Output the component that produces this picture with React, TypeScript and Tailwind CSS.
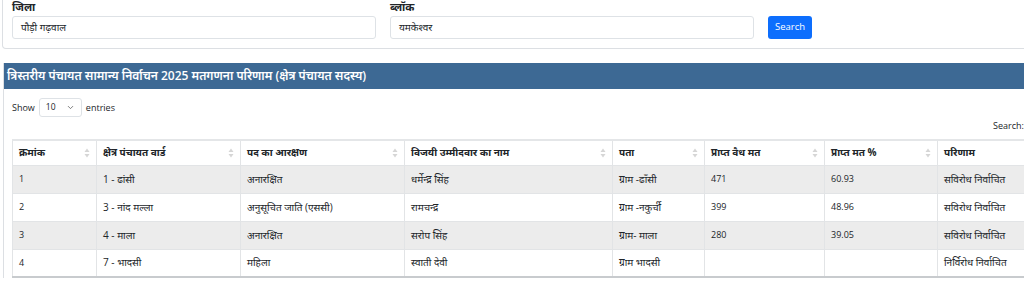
import { ChevronDown } from 'lucide-react'

const rows = [
  ['1', '1 - ढांसी', 'अनारक्षित', 'धर्मेन्द्र सिंह', 'ग्राम -ढाँसी', '471', '60.93', 'सविरोध निर्वाचित'],
  ['2', '3 - नांद मल्ला', 'अनुसूचित जाति (एससी)', 'रामचन्द्र', 'ग्राम -नकुर्ची', '399', '48.96', 'सविरोध निर्वाचित'],
  ['3', '4 - माला', 'अनारक्षित', 'सरोप सिंह', 'ग्राम- माला', '280', '39.05', 'सविरोध निर्वाचित'],
  ['4', '7 - भादसी', 'महिला', 'स्वाती देवी', 'ग्राम भादसी', '', '', 'निर्विरोध निर्वाचित'],
]

const columns = [
  { label: 'क्रमांक', w: 'w-[84px]' },
  { label: 'क्षेत्र पंचायत वार्ड', w: 'w-[144px]' },
  { label: 'पद का आरक्षण', w: 'w-[164px]' },
  { label: 'विजयी उम्मीदवार का नाम', w: 'w-[208px]' },
  { label: 'पता', w: 'w-[92px]' },
  { label: 'प्राप्त वैध मत', w: 'w-[120px]' },
  { label: 'प्राप्त मत %', w: 'w-[113px]' },
  { label: 'परिणाम', w: 'w-[120px]' },
]

function SortIcon() {
  return (
    <svg width="6" height="10" viewBox="0 0 6 10" className="shrink-0">
      <path d="M3 0.5 L5.5 4 H0.5 Z" fill="#d6d6d6" />
      <path d="M3 9.5 L5.5 6 H0.5 Z" fill="#d6d6d6" />
    </svg>
  )
}

export default function App() {
  return (
    <div className="h-[281px] w-screen overflow-hidden bg-white text-[#212529]" style={{ fontFamily: '"Open Sans", "Noto Sans", sans-serif' }}>
      <div className="w-[1080px]">
        {/* filter card */}
        <div className="ml-[2px] h-[49px] rounded-b-[4px] border-x border-b border-[#dcdfe3] px-[9px]">
          <div className="flex items-end gap-[14px]">
            <div className="w-[364px]">
              <div className="h-[16px] text-[11px] font-bold leading-[14px]">जिला</div>
              <div className="flex h-[23px] items-center rounded-[3px] border border-[#dee2e6] px-[8px] text-[10px]">पौड़ी गढ़वाल</div>
            </div>
            <div className="w-[364px]">
              <div className="h-[16px] text-[11px] font-bold leading-[14px]">ब्लॉक</div>
              <div className="flex h-[23px] items-center rounded-[3px] border border-[#dee2e6] px-[8px] text-[10px]">यमकेश्वर</div>
            </div>
            <button className="h-[23px] w-[44px] rounded-[3px] bg-[#0d6efd] text-[9.5px] text-white">Search</button>
          </div>
        </div>

        {/* results panel */}
        <div className="ml-[3px] mt-[14px] border-l border-[#dcdfe3]">
          <div className="flex h-[26px] items-center bg-[#3d6994] px-[3px] text-[12px] font-semibold text-white">
            त्रिस्तरीय पंचायत सामान्य निर्वाचन 2025 मतगणना परिणाम (क्षेत्र पंचायत सदस्य)
          </div>
          <div className="pl-[8px] pt-[9px]">
            <div className="flex items-center gap-[4px] text-[9px]">
              <span>Show</span>
              <div className="flex h-[19px] w-[43px] items-center justify-between rounded-[3px] border border-[#dee2e6] px-[6px]">
                <span className="text-[8.5px]">10</span>
                <ChevronDown size={9} strokeWidth={2} className="text-[#555]" />
              </div>
              <span>entries</span>
            </div>
            <div className="mt-[2px] h-[14px] pl-[981px] text-[9px] leading-[14px]">Search:</div>
            <table className="mt-[6px] table-fixed border-collapse border-b-2 border-[#c8cbce] text-[10px]">
              <thead>
                <tr className="h-[25px] border-t-2 border-[#e4e6e8]">
                  {columns.map((c) => (
                    <th key={c.label} className={`${c.w} border-x border-[#e2e4e6] px-[6px] text-left font-bold`}>
                      <div className="flex items-center justify-between">
                        <span>{c.label}</span>
                        <SortIcon />
                      </div>
                    </th>
                  ))}
                </tr>
              </thead>
              <tbody>
                {rows.map((r, i) => (
                  <tr key={r[0]} className={`h-[28px] border-t border-[#e2e4e6] ${i % 2 === 0 ? 'bg-[#ececec]' : 'bg-white'}`}>
                    {r.map((cell, j) => (
                      <td key={j} className={`border-x border-[#e2e4e6] px-[6px] ${/^[\d.]+$/.test(cell) ? 'text-[9px]' : ''}`}>
                        {cell}
                      </td>
                    ))}
                  </tr>
                ))}
              </tbody>
            </table>
          </div>
        </div>
      </div>
    </div>
  )
}
